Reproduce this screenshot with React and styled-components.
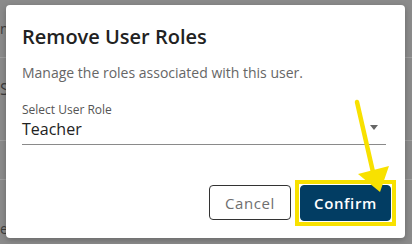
import styled, { createGlobalStyle } from 'styled-components';

const GlobalStyle = createGlobalStyle`
  html, body {
    margin: 0;
    padding: 0;
    width: 412px;
    height: 244px;
    overflow: hidden;
    font-family: 'Open Sans', 'Liberation Sans', sans-serif;
  }
`;

const Page = styled.div`
  position: relative;
  width: 412px;
  height: 244px;
  background: #8b8b8b;
  display: flex;
  flex-direction: column;
`;

const BgRow = styled.div`
  height: ${(p) => p.$h}px;
  border-bottom: ${(p) => (p.$line ? '1px solid #9e9e9e' : 'none')};
  display: flex;
  align-items: ${(p) => p.$align || 'center'};
  box-sizing: border-box;
`;

const BgText = styled.span`
  font-size: ${(p) => p.$size || 14}px;
  color: #3c3c3c;
  white-space: nowrap;
`;

const Dialog = styled.div`
  position: absolute;
  left: 6px;
  top: 5px;
  width: 399px;
  height: 233px;
  background: #fff;
  border-radius: 4px;
  box-shadow: 0 2px 6px rgba(0, 0, 0, 0.25);
  box-sizing: border-box;
  display: flex;
  flex-direction: column;
`;

const Body = styled.div`
  padding: 18px 19px 0 16px;
  display: flex;
  flex-direction: column;
`;

const Title = styled.h2`
  margin: 0;
  font-size: 20px;
  line-height: 28px;
  font-weight: 600;
  color: #222;
`;

const Subtitle = styled.p`
  margin: 12px 0 0;
  font-size: 14px;
  line-height: 20px;
  color: #666;
`;

const Field = styled.div`
  margin-top: 19px;
  display: flex;
  flex-direction: column;
`;

const Label = styled.label`
  font-size: 12px;
  line-height: 16px;
  color: #555;
`;

const SelectBox = styled.div`
  display: flex;
  align-items: center;
  justify-content: space-between;
  padding: 0 8px 4px 0;
  border-bottom: 1px solid #8a8a8a;
`;

const Value = styled.span`
  font-size: 16px;
  line-height: 22px;
  color: #222;
`;

const Caret = styled.span`
  width: 0;
  height: 0;
  border-left: 4.5px solid transparent;
  border-right: 4.5px solid transparent;
  border-top: 5px solid #666;
  margin-top: -3px;
`;

const Actions = styled.div`
  margin-top: auto;
  padding: 0 9px 12px;
  display: flex;
  justify-content: flex-end;
  align-items: center;
  gap: 4px;
`;

const Button = styled.button`
  width: ${(p) => p.$w}px;
  height: ${(p) => (p.$primary ? 36 : 35)}px;
  padding: 0;
  border-radius: 4px;
  font-family: inherit;
  font-size: 15px;
  font-weight: ${(p) => (p.$primary ? 600 : 400)};
  letter-spacing: 0.6px;
  cursor: pointer;
  border: 1px solid ${(p) => (p.$primary ? '#023d63' : '#333')};
  background: ${(p) => (p.$primary ? '#023d63' : '#fff')};
  color: ${(p) => (p.$primary ? '#fff' : '#6f6f6f')};
`;

const Highlight = styled.div`
  display: flex;
  padding: 1px;
  border: 4px solid #f8e100;
  margin-top: 1px;
`;

const Annotation = styled.svg`
  position: absolute;
  left: 0;
  top: 0;
  pointer-events: none;
`;

export default function App() {
  return (
    <>
      <GlobalStyle />
      <Page>
        <BgRow $h={58} $line>
          <BgText>n</BgText>
        </BgRow>
        <BgRow $h={83} $line $align="flex-start">
          <BgText $size={16} style={{ marginTop: 20 }}>Sr</BgText>
        </BgRow>
        <BgRow $h={39} $line />
        <BgRow $h={64} $align="flex-end">
          <BgText style={{ marginBottom: 6 }}>e</BgText>
        </BgRow>

        <Dialog>
          <Body>
            <Title>Remove User Roles</Title>
            <Subtitle>Manage the roles associated with this user.</Subtitle>
            <Field>
              <Label>Select User Role</Label>
              <SelectBox>
                <Value>Teacher</Value>
                <Caret />
              </SelectBox>
            </Field>
          </Body>
          <Actions>
            <Button $w={82}>Cancel</Button>
            <Highlight>
              <Button $primary $w={91}>Confirm</Button>
            </Highlight>
          </Actions>
        </Dialog>

        <Annotation width="412" height="244" viewBox="0 0 412 244">
          <line x1="357" y1="102" x2="373" y2="172" stroke="#f8e100" strokeWidth="4.5" strokeLinecap="round" />
          <polygon points="358,174 389,166 380,192" fill="#f8e100" />
        </Annotation>
      </Page>
    </>
  );
}
